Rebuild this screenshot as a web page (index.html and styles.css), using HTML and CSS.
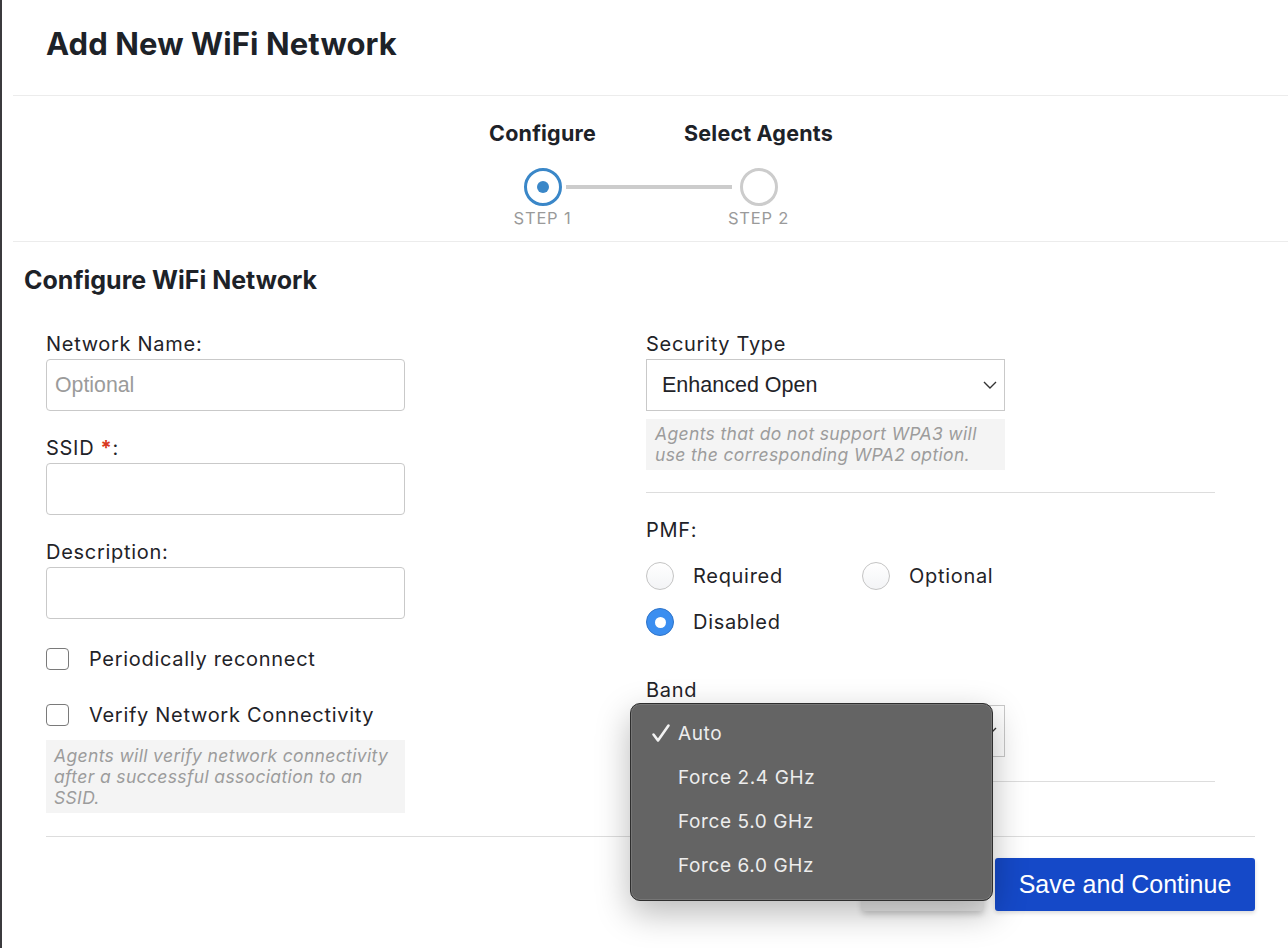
FILE: index.html
```html
<!DOCTYPE html>
<html lang="en">
<head>
<meta charset="utf-8">
<title>Add New WiFi Network</title>
<link rel="stylesheet" href="styles.css">
</head>
<body>
<div class="edge"></div>
<div class="modal">
  <header class="modal-header">
    <h1 class="modal-title">Add New WiFi Network</h1>
  </header>

  <section class="stepper">
    <div class="step-row">
      <span class="step-title">Configure</span>
      <span class="step-title">Select Agents</span>
    </div>
    <div class="step-track">
      <span class="step-dot active"><span class="step-dot-inner"></span></span>
      <span class="step-line"></span>
      <span class="step-dot"></span>
    </div>
    <div class="step-row">
      <span class="step-label">STEP 1</span>
      <span class="step-label">STEP 2</span>
    </div>
  </section>

  <section class="form-section">
    <h2 class="section-title">Configure WiFi Network</h2>
    <div class="form-body">
      <div class="form-grid">
        <div class="col">
          <div class="field">
            <label class="label">Network Name:</label>
            <div class="input placeholder">Optional</div>
          </div>
          <div class="field">
            <label class="label">SSID <span class="req">*</span>:</label>
            <div class="input"></div>
          </div>
          <div class="field">
            <label class="label">Description:</label>
            <div class="input"></div>
          </div>
          <div class="check-row first">
            <span class="checkbox"></span>
            <span class="check-text">Periodically reconnect</span>
          </div>
          <div class="check-row">
            <span class="checkbox"></span>
            <span class="check-text">Verify Network Connectivity</span>
          </div>
          <div class="help help-left">Agents will verify network connectivity after a successful association to an SSID.</div>
        </div>

        <div class="col">
          <div class="field">
            <label class="label">Security Type</label>
            <div class="select">
              <span>Enhanced Open</span>
              <svg class="chev" width="14" height="8" viewBox="0 0 14 8"><polyline points="1,1 7,7 13,1" fill="none" stroke="#333" stroke-width="1.4"/></svg>
            </div>
          </div>
          <div class="help help-right">Agents that do not support WPA3 will use the corresponding WPA2 option.</div>
          <div class="rule"></div>

          <div class="field pmf">
            <label class="label">PMF:</label>
            <div class="radio-grid">
              <div class="radio-row"><span class="radio"></span><span class="radio-text">Required</span></div>
              <div class="radio-row"><span class="radio"></span><span class="radio-text">Optional</span></div>
              <div class="radio-row"><span class="radio checked"></span><span class="radio-text">Disabled</span></div>
            </div>
          </div>

          <div class="field band">
            <label class="label">Band</label>
            <div class="select-wrap">
              <div class="select">
                <span></span>
                <svg class="chev" width="14" height="8" viewBox="0 0 14 8"><polyline points="1,1 7,7 13,1" fill="none" stroke="#333" stroke-width="1.4"/></svg>
              </div>
              <div class="menu">
                <div class="menu-item">
                  <span class="menu-check"><svg width="20" height="20" viewBox="0 0 20 20"><path d="M2.5 11.5 L7 17.5 L17.5 2.5" fill="none" stroke="#f2f2f2" stroke-width="2.6" stroke-linecap="round" stroke-linejoin="round"/></svg></span>
                  <span class="menu-text">Auto</span>
                </div>
                <div class="menu-item"><span class="menu-check"></span><span class="menu-text">Force 2.4 GHz</span></div>
                <div class="menu-item"><span class="menu-check"></span><span class="menu-text">Force 5.0 GHz</span></div>
                <div class="menu-item"><span class="menu-check"></span><span class="menu-text">Force 6.0 GHz</span></div>
              </div>
            </div>
          </div>
          <div class="rule rule-band"></div>
        </div>
      </div>

      <footer class="footer">
        <button class="btn btn-cancel">Cancel</button>
        <button class="btn btn-primary">Save and Continue</button>
      </footer>
    </div>
  </section>
</div>
</body>
</html>
```

FILE: styles.css
```css
* { box-sizing: border-box; }

html, body {
  margin: 0;
  padding: 0;
  background: #ffffff;
  height: 948px;
  overflow: hidden;
}

body {
  display: flex;
  font-family: Inter, "Liberation Sans", sans-serif;
  color: #1f2328;
}

.edge {
  width: 2px;
  flex: 0 0 2px;
  background: #3b3a3e;
}

.modal {
  flex: 1;
  margin-left: 11px;
}

/* header */
.modal-header {
  height: 96px;
  padding: 26px 33px 0;
  border-bottom: 1px solid #ececec;
}

.modal-title {
  margin: 0;
  font-size: 31px;
  line-height: 36px;
  font-weight: 700;
  color: #1d2228;
  letter-spacing: 0.1px;
}

/* stepper */
.stepper {
  height: 146px;
  padding-top: 25px;
  border-bottom: 1px solid #ececec;
  display: flex;
  flex-direction: column;
  align-items: center;
}

.step-row {
  display: flex;
  justify-content: center;
}

.step-row > span {
  width: 216px;
  text-align: center;
  white-space: nowrap;
}

.step-title {
  font-size: 21.5px;
  line-height: 24px;
  font-weight: 700;
  color: #1d2228;
  letter-spacing: 0.2px;
}

.step-track {
  margin-top: 23px;
  width: 254px;
  display: flex;
  align-items: center;
}

.step-dot {
  width: 38px;
  height: 38px;
  flex: 0 0 38px;
  border-radius: 50%;
  border: 3px solid #cccccc;
  display: flex;
  align-items: center;
  justify-content: center;
}

.step-dot.active {
  border-color: #3a87c8;
}

.step-dot-inner {
  width: 12px;
  height: 12px;
  border-radius: 50%;
  background: #3a87c8;
}

.step-line {
  flex: 1;
  height: 4px;
  margin: 0 8px 0 4px;
  background: #cccccc;
}

.step-label {
  margin-top: 2px;
  font-size: 16.5px;
  line-height: 20px;
  color: #9a9a9a;
  letter-spacing: 0.8px;
}

/* form */
.form-section {
  padding: 23px 33px 0 11px;
}

.section-title {
  margin: 0;
  font-size: 25px;
  line-height: 30px;
  font-weight: 700;
  color: #1d2228;
}

.form-body {
  padding-left: 22px;
}

.form-grid {
  margin-top: 37px;
  display: grid;
  grid-template-columns: 569px 569px;
  column-gap: 31px;
}

.col {
  display: flex;
  flex-direction: column;
}

.field + .field {
  margin-top: 25px;
}

.label {
  display: block;
  font-size: 20px;
  line-height: 24px;
  letter-spacing: 0.7px;
  color: #1f2328;
  margin-bottom: 3px;
}

.req {
  color: #d8391d;
  font-weight: 700;
}

.input {
  width: 359px;
  height: 52px;
  border: 1px solid #c9c9c9;
  border-radius: 4px;
  background: #fff;
  padding: 0 8px;
  display: flex;
  align-items: center;
  font-family: "Liberation Sans", Arial, sans-serif;
  font-size: 21.3px;
}

.placeholder {
  color: #9b9b9b;
}

.check-row {
  height: 36px;
  margin-top: 20px;
  display: flex;
  align-items: center;
  gap: 20px;
}

.check-row.first {
  margin-top: 22px;
}

.checkbox {
  width: 23px;
  height: 22px;
  flex: 0 0 23px;
  border: 1px solid #7a7a7a;
  border-radius: 4px;
  background: #fff;
}

.check-text {
  font-size: 20px;
  letter-spacing: 0.7px;
  color: #1f2328;
}

.help {
  background: #f4f4f4;
  color: #9c9c9c;
  font-style: italic;
  font-size: 17.5px;
  line-height: 21px;
  letter-spacing: 0.35px;
}

.help-left {
  margin-top: 7px;
  width: 359px;
  padding: 5px 8px;
}

.help-right {
  margin-top: 8px;
  width: 359px;
  padding: 4px 8px 5px 9px;
}

.select {
  width: 359px;
  height: 52px;
  border: 1px solid #c9c9c9;
  background: #fff;
  display: flex;
  align-items: center;
  justify-content: space-between;
  padding: 0 7px 0 15px;
  font-family: "Liberation Sans", Arial, sans-serif;
  font-size: 21.5px;
  color: #1f2328;
}

.chev {
  display: block;
}

.rule {
  height: 1px;
  background: #dddddd;
  margin-top: 22px;
}

.rule-band {
  margin-top: 24px;
}

.field.pmf {
  margin-top: 25px;
}

.radio-grid {
  margin-top: 11px;
  display: grid;
  grid-template-columns: 216px 216px;
}

.radio-row {
  height: 46px;
  display: flex;
  align-items: center;
  gap: 19px;
}

.radio {
  width: 28px;
  height: 28px;
  flex: 0 0 28px;
  border-radius: 50%;
  border: 1px solid #c4c4c4;
  background: linear-gradient(#ffffff, #f3f4f6);
  display: flex;
  align-items: center;
  justify-content: center;
}

.radio.checked {
  background: #3b8ef0;
  border-color: #2f74c9;
}

.radio.checked::after {
  content: "";
  width: 11px;
  height: 11px;
  border-radius: 50%;
  background: #fff;
}

.radio-text {
  font-size: 20px;
  letter-spacing: 0.7px;
  color: #1f2328;
}

.field.band {
  margin-top: 33px;
}

.select-wrap {
  position: relative;
}

.menu {
  position: absolute;
  left: -16px;
  top: -2px;
  width: 363px;
  height: 198px;
  padding-top: 7px;
  background: #646464;
  border: 1px solid #2e2e2e;
  border-radius: 10px;
  box-shadow: 0 12px 34px rgba(0, 0, 0, 0.28), inset 0 0 0 1px rgba(255, 255, 255, 0.12);
  z-index: 10;
}

.menu-item {
  height: 44px;
  display: flex;
  align-items: center;
}

.menu-check {
  width: 47px;
  flex: 0 0 47px;
  padding-left: 20px;
  display: flex;
  align-items: center;
}

.menu-text {
  font-size: 19px;
  color: #ededed;
  letter-spacing: 0.6px;
}

/* footer */
.footer {
  margin-top: 23px;
  border-top: 1px solid #dddddd;
  padding-top: 21px;
  display: flex;
  justify-content: flex-end;
  gap: 12px;
}

.btn {
  height: 53px;
  border: none;
  border-radius: 3px;
  font-family: "Liberation Sans", Arial, sans-serif;
  font-size: 25px;
  cursor: pointer;
}

.btn-cancel {
  width: 121px;
  background: #e9e9e9;
  color: #333;
  box-shadow: 0 3px 6px rgba(0, 0, 0, 0.2);
}

.btn-primary {
  width: 260px;
  background: #1549c8;
  color: #ffffff;
  box-shadow: 0 2px 4px rgba(0, 0, 0, 0.15);
}
```
